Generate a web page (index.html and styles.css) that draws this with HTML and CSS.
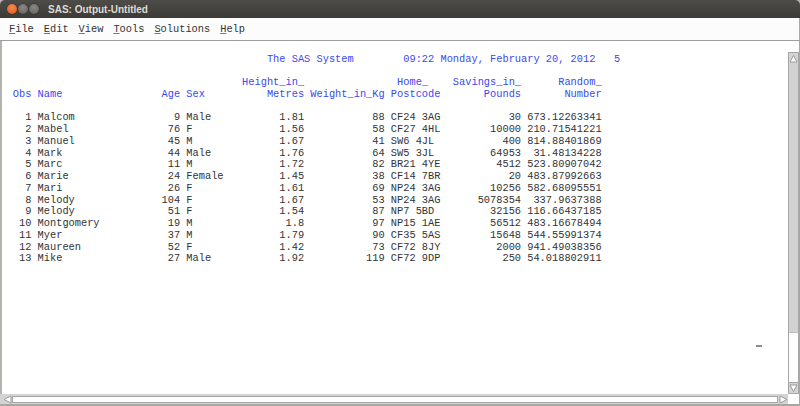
FILE: index.html
```
<!DOCTYPE html>
<html>
<head>
<meta charset="utf-8">
<title>SAS: Output-Untitled</title>
<link rel="stylesheet" href="styles.css">
</head>
<body>
<div class="window">
  <div class="titlebar">
    <div class="btns">
      <span class="btn close"></span>
      <span class="btn"></span>
      <span class="btn"></span>
    </div>
    <div class="title">SAS: Output-Untitled</div>
  </div>
  <div class="menubar">
    <span class="menu"><u>F</u>ile</span>
    <span class="menu"><u>E</u>dit</span>
    <span class="menu"><u>V</u>iew</span>
    <span class="menu"><u>T</u>ools</span>
    <span class="menu"><u>S</u>olutions</span>
    <span class="menu"><u>H</u>elp</span>
  </div>
  <div class="main">
    <div class="content">
<div class="listing"><div class="line hdr">                                         The SAS System        09:22 Monday, February 20, 2012   5</div><div class="line"> </div><div class="line hdr">                                     Height_in_               Home_    Savings_in_      Random_</div><div class="line hdr">Obs Name                Age Sex          Metres Weight_in_Kg Postcode       Pounds       Number</div><div class="line"> </div><div class="line">  1 Malcom                9 Male           1.81           88 CF24 3AG           30 673.12263341</div><div class="line">  2 Mabel                76 F              1.56           58 CF27 4HL        10000 210.71541221</div><div class="line">  3 Manuel               45 M              1.67           41 SW6 4JL           400 814.88401869</div><div class="line">  4 Mark                 44 Male           1.76           64 SW5 3JL         64953  31.48134228</div><div class="line">  5 Marc                 11 M              1.72           82 BR21 4YE         4512 523.80907042</div><div class="line">  6 Marie                24 Female         1.45           38 CF14 7BR           20 483.87992663</div><div class="line">  7 Mari                 26 F              1.61           69 NP24 3AG        10256 582.68095551</div><div class="line">  8 Melody              104 F              1.67           53 NP24 3AG      5078354  337.9637388</div><div class="line">  9 Melody               51 F              1.54           87 NP7 5BD         32156 116.66437185</div><div class="line"> 10 Montgomery           19 M               1.8           97 NP15 1AE        56512 483.16678494</div><div class="line"> 11 Myer                 37 M              1.79           90 CF35 5AS        15648 544.55991374</div><div class="line"> 12 Maureen              52 F              1.42           73 CF72 8JY         2000 941.49038356</div><div class="line"> 13 Mike                 27 Male           1.92          119 CF72 9DP          250 54.018802911</div></div>
      <span class="cursor"></span>
    </div>
    <div class="vscroll">
      <div class="arrow up"><svg width="9" height="9" viewBox="0 0 9 9"><path d="M4.5 1.5 L8 8 L1 8 Z" fill="#fff" stroke="#9a9a9a" stroke-width="1"/></svg></div>
      <div class="vthumb"></div>
      <div class="vtrough"></div>
      <div class="arrow down"><svg width="9" height="9" viewBox="0 0 9 9"><path d="M1 1 L8 1 L4.5 7.5 Z" fill="#fff" stroke="#9a9a9a" stroke-width="1"/></svg></div>
    </div>
  </div>
  <div class="hbar">
    <div class="harrow"><svg width="9" height="9" viewBox="0 0 9 9"><path d="M1 4.5 L8 1 L8 8 Z" fill="#fff" stroke="#9a9a9a" stroke-width="1"/></svg></div>
    <div class="htrough"></div>
    <div class="harrow"><svg width="9" height="9" viewBox="0 0 9 9"><path d="M8 4.5 L1 1 L1 8 Z" fill="#fff" stroke="#9a9a9a" stroke-width="1"/></svg></div>
    <div class="corner"></div>
  </div>
</div>
</body>
</html>
```
FILE: styles.css
```
html, body {
  margin: 0;
  padding: 0;
}
body {
  width: 800px;
  height: 406px;
  overflow: hidden;
  background: #b8b8b2;
  font-family: "Liberation Mono", "DejaVu Sans Mono", monospace;
}
.window {
  display: flex;
  flex-direction: column;
  height: 406px;
}
.titlebar {
  height: 18px;
  flex: none;
  display: flex;
  align-items: center;
  padding-left: 7px;
  background: linear-gradient(#4d4c48, #3c3b37);
  border-radius: 5px 5px 0 0;
}
.btns {
  display: flex;
  gap: 1px;
}
.btn {
  width: 10px;
  height: 10px;
  border-radius: 50%;
  background: radial-gradient(circle at 50% 35%, #8a8984, #5f5e5a);
  box-shadow: 0 0 0 0.5px #2e2d2a;
}
.btn.close {
  background: radial-gradient(circle at 50% 35%, #f7884f, #e0531c);
}
.title {
  margin-left: 9px;
  font-family: "Liberation Sans", "DejaVu Sans", sans-serif;
  font-weight: bold;
  font-size: 10px;
  color: #dfdbd2;
}
.menubar {
  height: 22px;
  flex: none;
  display: flex;
  align-items: center;
  gap: 10px;
  padding-left: 9px;
  background: #fcfcfc;
  border-bottom: 1px solid #9e9e9e;
  border-right: 1px solid #a8a8a8;
  font-size: 10.33px;
  color: #333;
}
.menu u {
  text-decoration-color: #777;
}
.main {
  flex: 1;
  display: flex;
  min-height: 0;
}
.content {
  flex: 1;
  position: relative;
  background: #fff;
  border-left: 2px solid #b3b3ad;
  padding: 12.5px 0 0 10.8px;
  overflow: hidden;
}
.listing {
  font-size: 10.33px;
  line-height: 11.75px;
  color: #333;
}
.line {
  white-space: pre;
  height: 11.75px;
}
.hdr {
  color: #3a48f0;
}
.cursor {
  position: absolute;
  left: 754px;
  top: 304px;
  width: 6px;
  height: 2px;
  background: #8c8c8c;
}
.vscroll {
  width: 12px;
  flex: none;
  background: #fff;
  padding-top: 11px;
  display: flex;
  flex-direction: column;
  border-right: 1px solid #a8a8a8;
  box-sizing: border-box;
}
.vscroll .arrow {
  height: 10px;
  flex: none;
  background: #d4d4d4;
  border: 1px solid #a6a6a6;
  display: flex;
  align-items: center;
  justify-content: center;
}
.vscroll .arrow.up {
  border-bottom: none;
}
.vthumb {
  flex: 1;
  background: #d2d2d2;
  border-left: 1px solid #a6a6a6;
  border-right: 1px solid #a6a6a6;
}
.vtrough {
  height: 49px;
  flex: none;
  background: #fdfdfd;
  border: 1px solid #a6a6a6;
  border-top: 1px solid #bcbcbc;
  border-bottom: none;
}
.hbar {
  height: 10px;
  flex: none;
  display: flex;
  padding-left: 2px;
  background: #d4d4d4;
  border-bottom: 2px solid #a8a8a2;
}
.harrow {
  width: 10px;
  flex: none;
  display: flex;
  align-items: center;
  justify-content: center;
  background: #d4d4d4;
}
.htrough {
  flex: 1;
  background: #fdfdfd;
  border: 1px solid #a6a6a6;
  margin: 2px 0 1px;
}
.corner {
  width: 12px;
  flex: none;
  background: #fff;
  border-right: 1px solid #a8a8a8;
  box-sizing: border-box;
}
```
